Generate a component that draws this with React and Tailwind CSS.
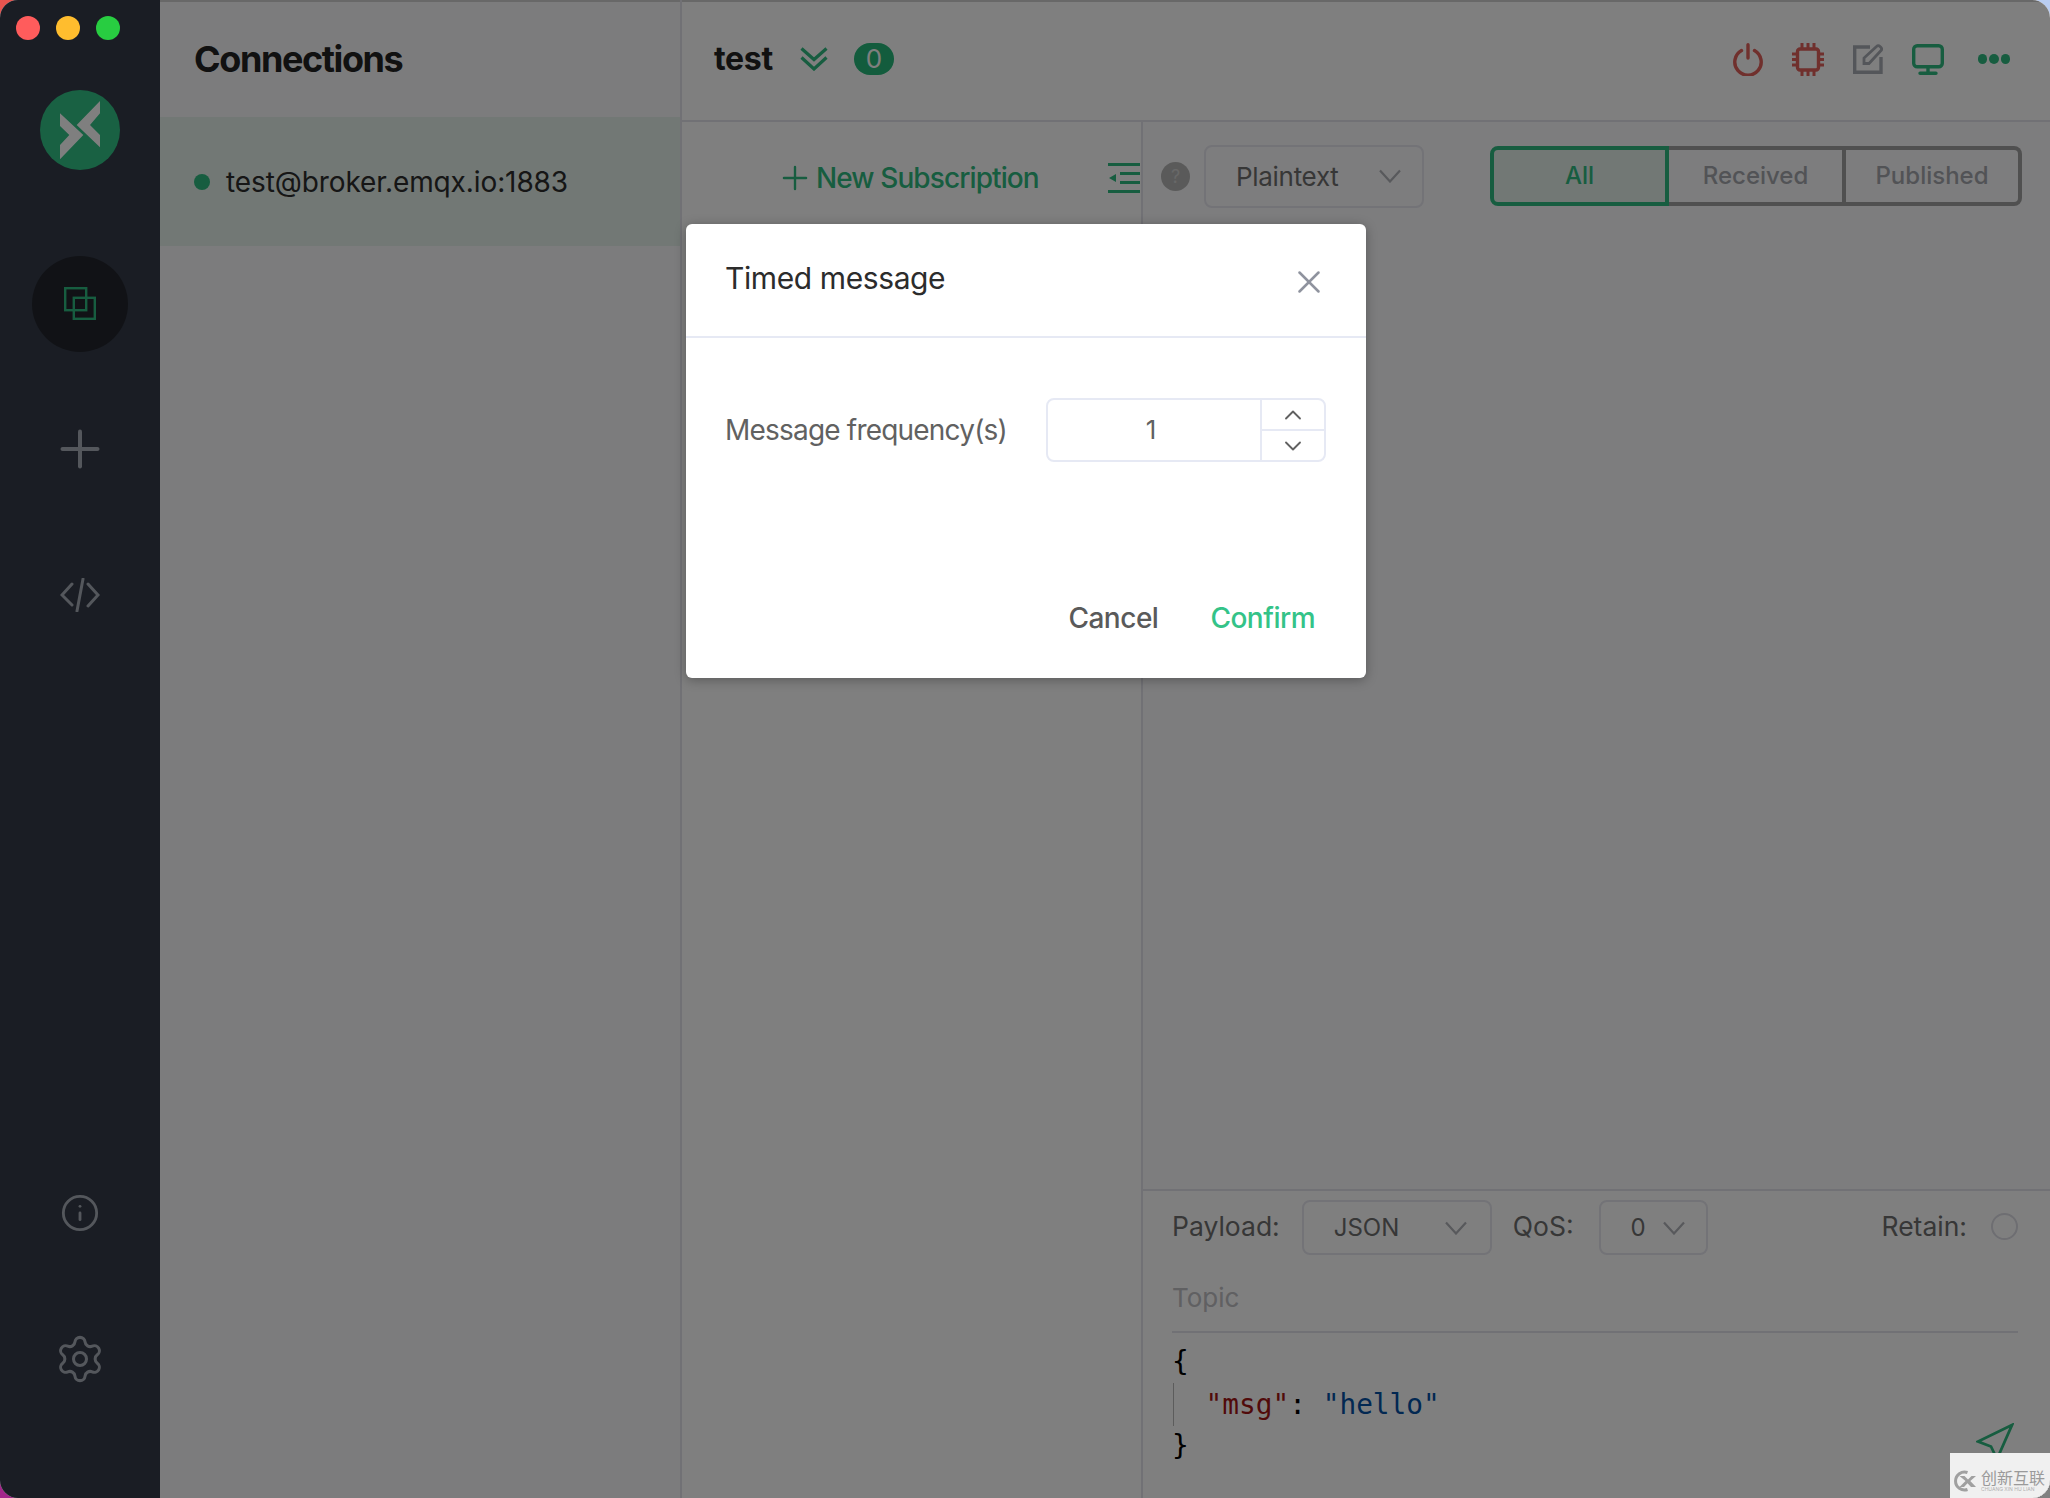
import React from "react";
import { Plus, Info, Settings, X, ChevronUp, ChevronDown } from "lucide-react";

function Logo() {
    return (
        <svg width="80" height="80" viewBox="0 0 80 80" className="shrink-0">
            <circle cx="40" cy="40" r="40" fill="#32c286" />
            <path d="M20 23.3 43.3 45 20 69.3V55l9.3-10L20 36Z" fill="#ffffff" />
            <path d="M60 11 36.7 35 60 57.3V45L50 35l10-11.7Z" fill="#ffffff" />
        </svg>
    );
}

function ConnectionsIcon() {
    return (
        <svg width="32" height="33" viewBox="0 0 32 33" fill="none" stroke="#2fba80" strokeWidth="2.4" className="-mt-[2px]">
            <rect x="1.2" y="1.2" width="21" height="22" />
            <rect x="9.8" y="10.8" width="21" height="21" />
        </svg>
    );
}

function DoubleChevron() {
    return (
        <svg width="28" height="24" viewBox="0 0 28 24" fill="none" stroke="#2fba80" strokeWidth="3.2">
            <path d="M1.5 1.5 14 12.5 26.5 1.5" />
            <path d="M1.5 10.5 14 22 26.5 10.5" />
        </svg>
    );
}

function PowerIcon() {
    return (
        <svg width="30" height="33" viewBox="0 0 30 33" fill="none" stroke="#e0605a" strokeWidth="3.4" strokeLinecap="round">
            <path d="M15 1.700v13.300" />
            <path d="M8.5 7.5a13.2 13.2 0 1 0 13 0" />
        </svg>
    );
}

function ChipIcon() {
    return (
        <svg width="32" height="33" viewBox="0 0 32 33" fill="none" stroke="#e0605a" strokeWidth="3">
            <rect x="5.5" y="6" width="21" height="21" rx="2.5" strokeWidth="3.4" />
            <path d="M10 0v6M16 0v6M22 0v6M10 27v6M16 27v6M22 27v6M0 11h5M0 16.500h5M0 22h5M27 11h5M27 16.500h5M27 22h5" />
        </svg>
    );
}

function EditIcon() {
    return (
        <svg width="30" height="30" viewBox="0 0 30 30" fill="none" stroke="#a8acb4" strokeWidth="3.4">
            <path d="M17 3H1.700v25.300H28V13" />
            <path d="M11 19.500V14L23.500 2.500a2.500 2.500 0 0 1 3.500 0l.8.8a2.500 2.500 0 0 1 0 3.500L16 19.500Z" strokeWidth="2.800" />
        </svg>
    );
}

function MonitorIcon() {
    return (
        <svg width="32" height="31" viewBox="0 0 32 31" fill="none" stroke="#2fba80" strokeWidth="3.4" strokeLinecap="round">
            <rect x="1.7" y="1.7" width="28.600" height="21" rx="3.500" />
            <path d="M16 23v6M8 29.300h16" />
        </svg>
    );
}

function OutdentIcon() {
    return (
        <svg width="32" height="30" viewBox="0 0 32 30" className="shrink-0">
            <path d="M0 0h32v3H0ZM12 9h20v3H12ZM12 18h20v3H12ZM0 27h32v3H0Z" fill="#2fba80" />
            <path d="M8 11v8l-7-4Z" fill="#2fba80" />
        </svg>
    );
}

function SendIcon() {
    return (
        <svg width="38" height="38" viewBox="0 0 38 38" fill="none" stroke="#2fba80" strokeWidth="2.8" className="mr-[4px] mb-[6px]">
            <path d="M36 2 2 18.500l13 5L21 36Z" />
        </svg>
    );
}

function SelectChevron({ className }) {
    return (
        <svg width="22" height="14" viewBox="0 0 22 14" fill="none" stroke="#b0b2b8" strokeWidth="2.200" className={className}>
            <path d="M1 1.500 11 12.500 21 1.500" />
        </svg>
    );
}

function WatermarkLogo() {
    return (
        <svg width="25" height="22" viewBox="0 0 25 22" fill="none" className="shrink-0">
            <path d="M15.500 2.500A9 9 0 1 0 15.500 19.500" stroke="#a0a0a0" strokeWidth="3" />
            <path d="M7.500 6h5l3.500 3.500L19.500 6H24l-5.700 5L24 17h-5l-3.500-3.700L12 17H7.500l6-6Z" fill="#a0a0a0" />
        </svg>
    );
}

export default function App() {
    return (
        <div className="w-[2050px] h-[1498px] bg-[conic-gradient(#b9cdf2_0_90deg,#808080_90deg_180deg,#a3268a_180deg_270deg,#e8544f_270deg_360deg)] font-['Inter',sans-serif] overflow-hidden">
            <div className="relative flex w-full h-full rounded-[18px] overflow-hidden bg-white">
                {/* window controls stay bright above the dim layer */}
                <div className="absolute z-20 left-[16px] top-[16px] flex gap-[16px]">
                    <div className="w-[24px] h-[24px] rounded-full bg-[#ff5c5c]" />
                    <div className="w-[24px] h-[24px] rounded-full bg-[#ffbd2e]" />
                    <div className="w-[24px] h-[24px] rounded-full bg-[#28cd41]" />
                </div>

                {/* Sidebar */}
                <aside className="w-[160px] shrink-0 h-full bg-[#343a48] flex flex-col items-center pt-[90px] pb-[113px]">
                    <Logo />
                    <div className="mt-[86px] w-[96px] h-[96px] rounded-full bg-[#22252c] flex items-center justify-center">
                        <ConnectionsIcon />
                    </div>
                    <Plus size={60} strokeWidth={1.600} className="mt-[67px] text-[#a8aeb8]" />
                    <svg width="40" height="34" viewBox="0 0 40 34" fill="none" stroke="#a8aeb8" strokeWidth="3" strokeLinecap="round" className="mt-[99px]">
                        <path d="M12 6 2 17l10 10M28 6l10 11-10 11M23 1l-6 32" />
                    </svg>
                    <Info size={40} strokeWidth={1.700} className="mt-auto text-[#a8aeb8]" />
                    <Settings size={52} strokeWidth={1.400} className="mt-[100px] text-[#a8aeb8]" />
                </aside>

                {/* Connections list */}
                <section className="w-[522px] shrink-0 h-full bg-[#f9f9fb] border-r-2 border-[#e2e2ea]">
                    <div className="h-[117px] flex items-center pl-[34px] pb-[2px] border-t-2 border-[#d0d0d0]">
                        <h1 className="text-[36px] leading-none font-bold tracking-[-1.4px] text-[#222222]">Connections</h1>
                    </div>
                    <div className="h-[129px] bg-[#e4f0ea] flex items-center pl-[34px] gap-[16px]">
                        <span className="w-[16px] h-[16px] rounded-full bg-[#2fba80]" />
                        <span className="text-[28px] leading-none tracking-[-0.1px] text-[#2c2c2c]">test@broker.emqx.io:1883</span>
                    </div>
                </section>

                {/* Main */}
                <main className="flex-1 min-w-0 h-full flex flex-col bg-white">
                    <header className="h-[122px] shrink-0 flex items-center border-t-2 border-b-2 border-t-[#d0d0d0] border-b-[#e2e2ea] pl-[32px] pr-[40px] pb-[4px]">
                        <span className="text-[32px] leading-none font-bold tracking-[-0.3px] text-[#222222]">test</span>
                        <span className="ml-[27px]"><DoubleChevron /></span>
                        <span className="ml-[26px] w-[40px] h-[32px] rounded-full bg-[#26b97a] text-white text-[26px] leading-[32px] text-center">0</span>
                        <div className="ml-auto flex items-center">
                            <PowerIcon />
                            <span className="ml-[29px]"><ChipIcon /></span>
                            <span className="ml-[29px]"><EditIcon /></span>
                            <span className="ml-[29px]"><MonitorIcon /></span>
                            <div className="ml-[34px] flex gap-[2px]">
                                <span className="w-[9.500px] h-[9.500px] rounded-full bg-[#2fba80]" />
                                <span className="w-[9.500px] h-[9.500px] rounded-full bg-[#2fba80]" />
                                <span className="w-[9.500px] h-[9.500px] rounded-full bg-[#2fba80]" />
                            </div>
                        </div>
                    </header>

                    <div className="flex-1 min-h-0 flex">
                        {/* Subscriptions */}
                        <div className="w-[461px] shrink-0 border-r-2 border-[#e2e2ea] bg-white">
                            <div className="h-[112px] flex items-center pl-[102px]">
                                <Plus size={38} strokeWidth={1.500} className="text-[#2fba80] -ml-[8px]" />
                                <span className="ml-[2px] text-[28px] leading-none font-medium tracking-[-0.9px] text-[#2fba80]">New Subscription</span>
                                <span className="ml-auto mr-[1px]"><OutdentIcon /></span>
                            </div>
                        </div>

                        {/* Messages */}
                        <div className="flex-1 min-w-0 flex flex-col bg-[#fafafc]">
                            <div className="h-[108px] shrink-0 flex items-center pl-[18px] pr-[28px]">
                                <span className="w-[29px] h-[29px] rounded-full bg-[#b5b5b5] text-[#d0d0d0] text-[18px] leading-[29px] text-center">?</span>
                                <div className="ml-[14px] w-[220px] h-[63px] border-2 border-[#e6e6ee] rounded-[8px] flex items-center pl-[30px] pr-[21px]">
                                    <span className="text-[26px] leading-none tracking-[-0.3px] text-[#6e6e6e] pt-[2px]">Plaintext</span>
                                    <SelectChevron className="ml-auto" />
                                </div>
                                <div className="ml-auto flex h-[60px] w-[532px] text-[24px] font-medium">
                                    <div className="w-[179px] flex items-center justify-center border-4 border-[#2fba80] rounded-l-[8px] bg-[#e4f0ea] text-[#2fba80]">All</div>
                                    <div className="w-[177px] flex items-center justify-center border-y-4 border-r-4 border-[#a0a0a0] text-[#a4a7ad]">Received</div>
                                    <div className="flex-1 flex items-center justify-center border-y-4 border-r-4 border-[#a0a0a0] rounded-r-[8px] text-[#a4a7ad]">Published</div>
                                </div>
                            </div>

                            <div className="flex-1" />

                            {/* Publish box */}
                            <div className="h-[309px] shrink-0 border-t-2 border-[#e2e2ea] bg-white pl-[29px] pr-[32px] pt-[9px]">
                                <div className="h-[55px] flex items-center text-[26.500px] leading-none text-[#6e6e6e]">
                                    <span className="-mt-[2px]">Payload:</span>
                                    <div className="ml-[22px] w-[190px] h-[55px] border-2 border-[#e6e6ee] rounded-[8px] flex items-center pl-[30px] pr-[23px]">
                                        <span className="text-[24px]">JSON</span>
                                        <SelectChevron className="ml-auto" />
                                    </div>
                                    <span className="ml-[21px] -mt-[2px]">QoS:</span>
                                    <div className="ml-[25px] w-[109px] h-[55px] border-2 border-[#e6e6ee] rounded-[8px] flex items-center pl-[30px] pr-[21px]">
                                        <span className="text-[24px]">0</span>
                                        <SelectChevron className="ml-auto" />
                                    </div>
                                    <span className="ml-auto -mt-[2px]">Retain:</span>
                                    <span className="ml-[24px] w-[27px] h-[27px] rounded-full border-2 border-[#dcdce4] -mt-[2px]" />
                                </div>
                                <div className="h-[78px] flex items-center pt-[10px] border-b-2 border-[#e2e2ea] text-[26px] leading-none text-[#c0c0c4]">Topic</div>
                                <div className="mt-[8px] flex items-end justify-between">
                                    <div className="font-['DejaVu_Sans_Mono',monospace] text-[27.800px] leading-[42px] text-black whitespace-pre">
                                        <div>{"{"}</div>
                                        <div className="relative pt-[1px] -mb-[1px]">
                                            <span className="absolute left-[1px] top-0 w-[1px] h-full bg-[#b8b8b8]" />
                                            {"  "}<span className="text-[#a31515]">"msg"</span>: <span className="text-[#0451a5]">"hello"</span>
                                        </div>
                                        <div>{"}"}</div>
                                    </div>
                                    <SendIcon />
                                </div>
                            </div>
                        </div>
                    </div>
                </main>

                {/* Dim layer + dialog */}
                <div className="absolute inset-0 z-10 bg-black/50 flex justify-center items-start pt-[224px] pl-[2px]">
                    <div className="w-[680px] h-[454px] bg-white rounded-[6px] shadow-[0_2px_12px_rgba(0,0,0,0.3)] flex flex-col">
                        <div className="h-[114px] shrink-0 border-b-2 border-[#e6e9f4] flex items-center justify-between pl-[39px] pr-[38px] pb-[4px]">
                            <span className="text-[30px] leading-none tracking-[-0.4px] text-[#2c2c2c]">Timed message</span>
                            <X size={38} strokeWidth={1.600} className="text-[#8f939e] mt-[8px]" />
                        </div>
                        <div className="flex items-center pl-[39px] pt-[60px]">
                            <span className="w-[281px] whitespace-nowrap text-[28px] leading-none tracking-[-0.8px] text-[#616161]">Message frequency(s)</span>
                            <div className="ml-[40px] w-[280px] h-[64px] border-2 border-[#e6e9f4] rounded-[8px] flex">
                                <div className="flex-1 flex items-center justify-center text-[26px] leading-none text-[#616161] pr-[6px]">1</div>
                                <div className="w-[64px] border-l-2 border-[#e6e9f4] flex flex-col">
                                    <div className="flex-1 flex items-center justify-center border-b-2 border-[#e6e9f4]">
                                        <ChevronUp size={28} strokeWidth={1.600} className="text-[#616161]" />
                                    </div>
                                    <div className="flex-1 flex items-center justify-center">
                                        <ChevronDown size={28} strokeWidth={1.600} className="text-[#616161]" />
                                    </div>
                                </div>
                            </div>
                        </div>
                        <div className="mt-auto flex justify-end gap-[52px] pr-[51px] pb-[43px] text-[28px] leading-[34px] font-medium tracking-[-0.5px]">
                            <span className="text-[#5a5a5a]">Cancel</span>
                            <span className="text-[#34c388]">Confirm</span>
                        </div>
                    </div>
                </div>

                {/* Watermark */}
                <div className="absolute z-20 right-0 bottom-0 w-[100px] h-[45px] bg-[#f0f0f0] flex items-center pl-[2px] pt-[10px]">
                    <WatermarkLogo />
                    <div className="ml-[4px] flex flex-col">
                        <span className="font-['Noto_Sans_CJK_SC',sans-serif] text-[16px] leading-[17px] text-[#9a9a9a] whitespace-nowrap">创新互联</span>
                        <span className="text-[5px] leading-[6px] text-[#b0b0b0] whitespace-nowrap">CHUANG XIN HU LIAN</span>
                    </div>
                </div>
            </div>
        </div>
    );
}
